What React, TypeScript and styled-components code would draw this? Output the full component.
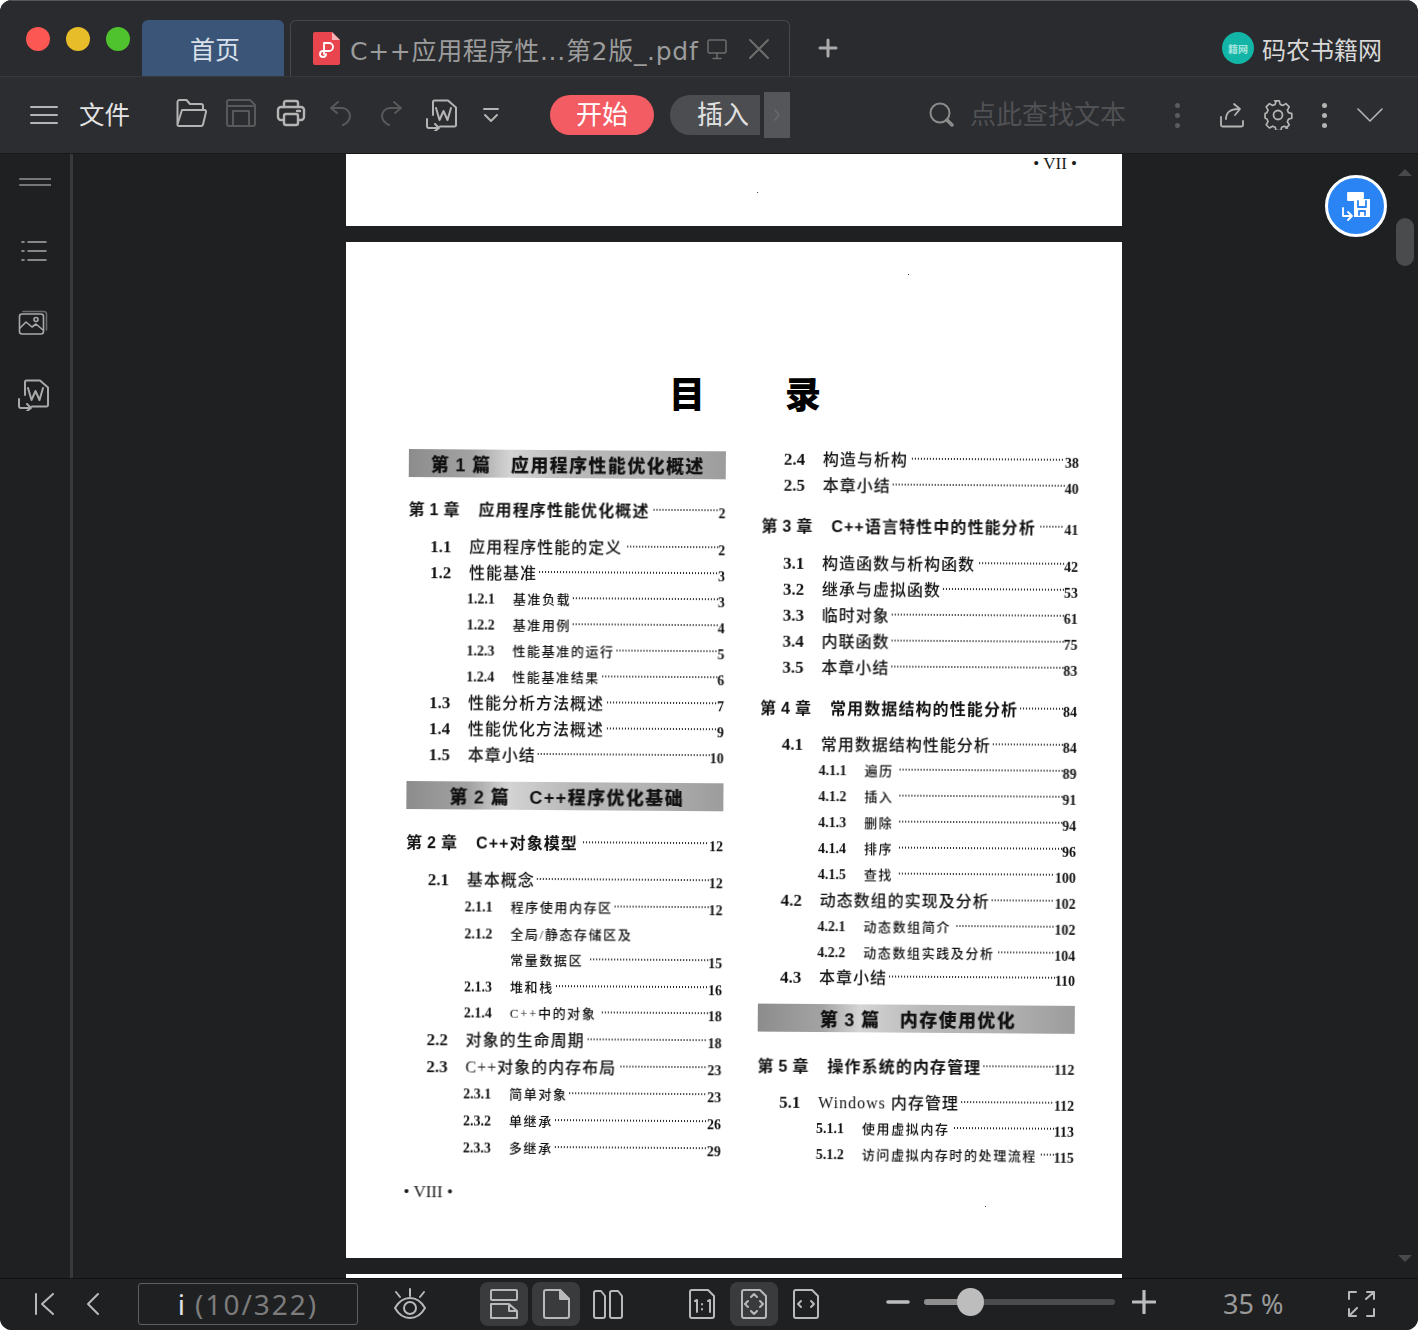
import React from "react"
import styled, { createGlobalStyle } from "styled-components"

const CJK = `"Noto Sans CJK SC", "Noto Sans", sans-serif`
const SERIF = `"Liberation Serif", "Noto Sans CJK SC", serif`
const SANS = `"Liberation Sans", "Noto Sans CJK SC", sans-serif`

const GlobalStyle = createGlobalStyle`
    html, body {
        margin: 0;
        padding: 0;
        background: #fff;
    }
    * {
        box-sizing: border-box;
    }
`

const Window = styled.div`
    width: 1418px;
    height: 1330px;
    border-radius: 12px;
    overflow: hidden;
    display: flex;
    flex-direction: column;
    background: #1f2022;
    font-family: ${CJK};
`

/* title bar */

const TitleBar = styled.div`
    height: 77px;
    flex: none;
    display: flex;
    align-items: flex-end;
    background: #2a2b2e;
    border-top: 1px solid #55565a;
    border-bottom: 1px solid #393a3d;
    padding-left: 26px;
`

const Lights = styled.div`
    display: flex;
    gap: 16px;
    align-self: center;
    margin-right: 12px;
`

const Light = styled.span<{ $color: string }>`
    width: 24px;
    height: 24px;
    border-radius: 50%;
    background: ${({ $color }) => $color};
`

const HomeTab = styled.div`
    width: 142px;
    height: 56px;
    border-radius: 6px 6px 0 0;
    background: #3b5578;
    color: #d9e0ea;
    font-size: 25px;
    display: flex;
    align-items: center;
    justify-content: center;
    padding-left: 4px;
    margin-right: 6px;
`

const DocTab = styled.div`
    width: 500px;
    height: 56px;
    border: 1px solid #47484b;
    border-bottom: none;
    border-radius: 6px 6px 0 0;
    display: flex;
    align-items: center;
    padding-left: 22px;
    color: #9c9c9c;
`

const DocTitle = styled.span`
    font-family: "DejaVu Sans", ${CJK};
    font-size: 25px;
    letter-spacing: 0.7px;
    margin-left: 10px;
    white-space: nowrap;
    width: 356px;
`

const TabAction = styled.span<{ $ml?: number }>`
    display: flex;
    margin-left: ${({ $ml }) => $ml ?? 0}px;
    color: #6d6d6d;
`

const AddTab = styled.div`
    height: 56px;
    margin-left: 28px;
    display: flex;
    align-items: center;
    color: #aaa;
`

const Brand = styled.div`
    height: 56px;
    margin-left: auto;
    padding-right: 36px;
    display: flex;
    align-items: center;
    gap: 8px;
    color: #d8d8d8;
    font-size: 24px;
`

const BrandLogo = styled.span`
    width: 32px;
    height: 32px;
    border-radius: 50%;
    background: #12b5a6;
    color: #a5e6df;
    font-size: 10px;
    font-weight: 700;
    display: flex;
    align-items: center;
    justify-content: center;
`

/* tool bar */

const ToolBar = styled.div`
    height: 77px;
    flex: none;
    display: flex;
    align-items: center;
    background: #2c2d30;
    border-bottom: 1px solid #18191a;
    padding-left: 30px;
`

const FileLabel = styled.span`
    color: #e4e4e4;
    font-size: 25.500px;
    line-height: 1;
    padding-bottom: 5px;
    margin-left: 21px;
`

const ToolGroup = styled.div`
    display: flex;
    margin-left: 36px;
`

const ToolButton = styled.div<{ $dim?: boolean; $raised?: boolean }>`
    width: 50px;
    height: 34px;
    padding-bottom: ${({ $raised }) => ($raised ? 4 : 0)}px;
    display: flex;
    align-items: center;
    justify-content: center;
    color: ${({ $dim }) => ($dim ? "#58595b" : "#b4b4b4")};
`

const StartPill = styled.div`
    width: 104px;
    height: 40px;
    margin-left: 34px;
    padding-bottom: 4px;
    border-radius: 20px;
    background: #f45c64;
    color: #fff;
    font-size: 26px;
    line-height: 1;
    display: flex;
    align-items: center;
    justify-content: center;
`

const InsertPill = styled.div`
    width: 90px;
    height: 40px;
    margin-left: 16px;
    padding: 0 0 4px 16px;
    border-radius: 20px 0 0 20px;
    background: #4c4d50;
    color: #e0e0e0;
    font-size: 26px;
    line-height: 1;
    display: flex;
    align-items: center;
    justify-content: center;
`

const MoreTabs = styled.div`
    width: 26px;
    height: 46px;
    margin-left: 4px;
    background: #555659;
    color: #68696b;
    display: flex;
    align-items: center;
    justify-content: center;
`

const SearchIcon = styled.div`
    margin-left: 139px;
    display: flex;
    color: #8c8c8c;
`

const SearchHint = styled.span`
    margin-left: 16px;
    padding-bottom: 4px;
    color: #505154;
    font-size: 26px;
    line-height: 1;
`

const Dots = styled.div<{ $ml: number; $color: string }>`
    margin-left: ${({ $ml }) => $ml}px;
    display: flex;
    flex-direction: column;
    gap: 5px;

    &::before,
    &::after,
    span {
        content: "";
        display: block;
        width: 5px;
        height: 5px;
        border-radius: 50%;
        background: ${({ $color }) => $color};
    }
`

const PlainIcon = styled.div<{ $ml: number }>`
    margin-left: ${({ $ml }) => $ml}px;
    display: flex;
    color: #b4b4b4;
`

/* main area */

const Main = styled.div`
    flex: 1;
    min-height: 0;
    display: flex;
    position: relative;
`

const SideBar = styled.div`
    width: 73px;
    flex: none;
    display: flex;
    flex-direction: column;
    align-items: center;
    padding: 10px 9px 0 0;
    border-right: 3px solid #39393b;
    color: #a9a9a9;
`

const SideItem = styled.div`
    height: 72px;
    width: 100%;
    display: flex;
    align-items: center;
    justify-content: center;
    padding-left: 4px;
    flex: none;

    &:first-child {
        height: 36px;
        margin-bottom: 15px;
    }
`

const Canvas = styled.div`
    flex: 1;
    min-width: 0;
    overflow: hidden;
    display: flex;
    flex-direction: column;
    align-items: center;
    gap: 16px;
    background: #1f2022;
`

const Sheet = styled.div<{ $h: number }>`
    width: 776px;
    height: ${({ $h }) => $h}px;
    flex: none;
    background: #fff;
    color: #111;
    position: relative;
`

const SheetFoot = styled.div`
    font-family: ${SERIF};
    font-size: 17px;
    line-height: 20px;
    text-align: right;
    padding-right: 45px;
    color: #1c1c1c;
`

const Speck = styled.i<{ $x: number; $y: number }>`
    position: absolute;
    left: ${({ $x }) => $x}px;
    top: ${({ $y }) => $y}px;
    width: 1px;
    height: 1px;
    background: #444;
`

const BigTitle = styled.div`
    margin-top: 125px;
    height: 50px;
    display: flex;
    justify-content: center;
    gap: 80px;
    padding-left: 22px;
    font-size: 36px;
    font-weight: 900;
    line-height: 50px;
    color: #000;
`

const Scan = styled.div`
    margin: 25px 0 0 63px;
    width: 672px;
    transform: rotate(0.42deg);
    transform-origin: 0 0;
    filter: blur(0.35px);
`

const Columns = styled.div`
    display: flex;
    gap: 36px;
    align-items: flex-start;
`

const Column = styled.div<{ $top: number }>`
    width: 317px;
    flex: none;
    display: flex;
    flex-direction: column;
    padding-top: ${({ $top }) => $top}px;
`

const Banner = styled.div<{ $indent: number; $dy: number }>`
    height: 28px;
    flex: none;
    margin: 15px 0 3px;
    padding-left: ${({ $indent }) => $indent}px;
    display: flex;
    align-items: center;
    gap: 20px;
    background: linear-gradient(90deg, #8c8c8c 0%, #a3a3a3 20%, #d4d4d4 32%, #b9b9b9 52%, #b3b3b3 75%, #9c9c9c 100%);
    font-family: ${SANS};
    font-size: 18px;
    font-weight: 900;
    color: #111;
    white-space: nowrap;
    transform: translateY(${({ $dy }) => $dy}px);

    &:first-child {
        margin-top: 0;
    }
`

const BannerLabel = styled.span`
    letter-spacing: 0.8px;
`

const BannerTitle = styled.span`
    letter-spacing: 1.4px;
`

type Kind = "chapter" | "sec" | "sub" | "cont"

const rowSpace: Record<Kind, string> = {
    chapter: "margin-top: 15px; margin-bottom: 11px; padding-left: 0;",
    sec: "padding-left: 22px;",
    sub: "padding-left: 59px;",
    cont: "padding-left: 105px;",
}

const Row = styled.div<{ $kind: Kind; $dy: number }>`
    height: 26px;
    flex: none;
    display: flex;
    align-items: center;
    white-space: nowrap;
    ${({ $kind }) => rowSpace[$kind]}
    transform: translateY(${({ $dy }) => $dy}px);
`

const numberWidth: Record<Kind, number> = { chapter: 70, sec: 39, sub: 46, cont: 0 }

const RowNumber = styled.span<{ $kind: Kind }>`
    flex: none;
    width: ${({ $kind }) => numberWidth[$kind]}px;
    padding-top: ${({ $kind }) => ($kind === "chapter" ? 0 : 3)}px;
    font-family: ${({ $kind }) => ($kind === "chapter" ? SANS : SERIF)};
    font-size: ${({ $kind }) => ($kind === "sub" ? 14 : $kind === "sec" ? 17 : 16)}px;
    font-weight: 700;
    letter-spacing: ${({ $kind }) => ($kind === "chapter" ? 0.3 : 0)}px;
`

const RowTitle = styled.span<{ $kind: Kind }>`
    flex: none;
    font-family: ${({ $kind }) => ($kind === "chapter" ? SANS : SERIF)};
    font-size: ${({ $kind }) => ($kind === "sub" || $kind === "cont" ? 13 : 16)}px;
    font-weight: ${({ $kind }) => ($kind === "chapter" ? 700 : 500)};
    letter-spacing: ${({ $kind }) =>
        $kind === "sub" || $kind === "cont" ? 1.6 : $kind === "chapter" ? 1.1 : 1}px;
`

const Leader = styled.span<{ $gap: number }>`
    flex: 1;
    height: 2px;
    margin-left: ${({ $gap }) => $gap}px;
    background-image: radial-gradient(circle, #222 0.8px, transparent 1px);
    background-size: 3px 2px;
`

const PageNo = styled.span`
    flex: none;
    font-family: ${SERIF};
    font-size: 14px;
    font-weight: 700;
    padding-top: 7px;
`

const Footer = styled.div`
    margin-top: 17px;
    font-family: ${SERIF};
    font-size: 17px;
    line-height: 22px;
    color: #1c1c1c;
`

const Fab = styled.div`
    position: absolute;
    top: 21px;
    right: 31px;
    width: 62px;
    height: 62px;
    border-radius: 50%;
    border: 3px solid #fff;
    background: #2b84f3;
    display: flex;
    align-items: center;
    justify-content: center;
    color: #fff;
`

const ScrollRail = styled.div`
    width: 23px;
    flex: none;
    display: flex;
    flex-direction: column;
    align-items: center;
    padding-right: 3px;
    background: #1f2022;
`

const ScrollArrow = styled.span<{ $down?: boolean }>`
    width: 0;
    height: 0;
    border-left: 7px solid transparent;
    border-right: 7px solid transparent;
    ${({ $down }) =>
        $down
            ? "border-top: 7px solid #48494b; margin: auto 0 16px;"
            : "border-bottom: 7px solid #48494b; margin-top: 15px;"}
`

const ScrollThumb = styled.span`
    width: 18px;
    height: 48px;
    margin-top: 42px;
    border-radius: 9px;
    background: #4a4b4d;
`

/* bottom bar */

const BottomBar = styled.div`
    height: 52px;
    flex: none;
    display: flex;
    align-items: center;
    padding-bottom: 2px;
    background: #1f2022;
    border-top: 1px solid #111213;
`

const NavButton = styled.div<{ $ml?: number; $color?: string }>`
    width: 48px;
    height: 44px;
    flex: none;
    margin-left: ${({ $ml }) => $ml ?? 0}px;
    display: flex;
    align-items: center;
    justify-content: center;
    color: ${({ $color }) => $color ?? "#b9b9b9"};
`

const ViewGroup = styled.div<{ $ml: number }>`
    display: flex;
    gap: 4px;
    margin-left: ${({ $ml }) => $ml}px;
`

const ViewButton = styled(NavButton)<{ $active?: boolean }>`
    border-radius: 8px;
    background: ${({ $active }) => ($active ? "#3a3b3d" : "transparent")};
`

const PageBox = styled.div`
    width: 220px;
    height: 42px;
    margin-left: 21px;
    border: 1px solid #5f6062;
    border-radius: 3px;
    display: flex;
    align-items: center;
    justify-content: center;
    font-family: "Noto Sans", sans-serif;
    font-size: 28px;
    line-height: 1;
    letter-spacing: 2px;
    color: #7c7c7c;
    gap: 8px;
`

const PageCurrent = styled.span`
    color: #e2e2e2;
`

const ZoomSign = styled.div<{ $ml: number }>`
    margin-left: ${({ $ml }) => $ml}px;
    margin-bottom: 3px;
    display: flex;
    color: #bdbdbd;
`

const Slider = styled.div`
    width: 191px;
    height: 6px;
    margin: 0 0 3px 14px;
    border-radius: 3px;
    background: #4b4c4e;
    position: relative;
`

const SliderFill = styled.div`
    height: 100%;
    border-radius: 3px;
    background: #8f8f8f;
`

const SliderThumb = styled.span`
    position: absolute;
    left: 33px;
    top: -11px;
    width: 27px;
    height: 28px;
    border-radius: 50%;
    background: #bdbdbd;
`

const ZoomValue = styled.span`
    width: 60px;
    margin-left: 67px;
    font-family: "Noto Sans", sans-serif;
    font-size: 27px;
    line-height: 1;
    color: #9a9a9a;
    white-space: nowrap;
`

const FullScreen = styled.div`
    margin-left: 64px;
    display: flex;
    color: #b9b9b9;
`

const Glyph = styled.svg<{ $sw?: number }>`
    display: block;
    flex: none;
    fill: none;
    stroke: currentColor;
    stroke-width: ${({ $sw }) => $sw ?? 2};
    stroke-linecap: round;
    stroke-linejoin: round;
`

function Icon({ w, h, sw, children }: { w: number; h: number; sw?: number; children: React.ReactNode }) {
    return (
        <Glyph width={w} height={h} viewBox={`0 0 ${w} ${h}`} $sw={sw}>
            {children}
        </Glyph>
    )
}

const WordDoc = () => (
    <Icon w={32} h={32}>
        <path d="M8 16V3a1.5 1.5 0 0 1 1.5-1.5H23l8 7V26a1.5 1.5 0 0 1-1.5 1.5H15" />
        <path d="M11 9l3.5 12 4-9 4 9 3.5-12" />
        <path d="M2 20v7a2 2 0 0 0 2 2h10M10 25l4 4-4 3" />
    </Icon>
)

type Toc =
    | { part: [string, string]; indent: number; dy?: number }
    | { k: Kind; n?: string; t: string; p?: string; gap?: number; dy?: number }

// dy follows the page skew of the scan, rows are not evenly spaced in the reference
const leftToc: Toc[] = [
    { part: ["第 1 篇", "应用程序性能优化概述"], indent: 22 },
    { k: "chapter", n: "第 1 章", t: "应用程序性能优化概述", p: "2", gap: 3 },
    { k: "sec", n: "1.1", t: "应用程序性能的定义", p: "2", gap: 4 },
    { k: "sec", n: "1.2", t: "性能基准", p: "3" },
    { k: "sub", n: "1.2.1", t: "基准负载", p: "3" },
    { k: "sub", n: "1.2.2", t: "基准用例", p: "4" },
    { k: "sub", n: "1.2.3", t: "性能基准的运行", p: "5" },
    { k: "sub", n: "1.2.4", t: "性能基准结果", p: "6" },
    { k: "sec", n: "1.3", t: "性能分析方法概述", p: "7", gap: 2 },
    { k: "sec", n: "1.4", t: "性能优化方法概述", p: "9", gap: 2 },
    { k: "sec", n: "1.5", t: "本章小结", p: "10" },
    { part: ["第 2 篇", "C++程序优化基础"], indent: 43 },
    { k: "chapter", n: "第 2 章", t: "C++对象模型", p: "12", gap: 4, dy: 1 },
    { k: "sec", n: "2.1", t: "基本概念", p: "12", dy: 1 },
    { k: "sub", n: "2.1.1", t: "程序使用内存区", p: "12", dy: 2 },
    { k: "sub", n: "2.1.2", t: "全局/静态存储区及", dy: 3 },
    { k: "cont", t: "常量数据区", p: "15", gap: 6, dy: 3 },
    { k: "sub", n: "2.1.3", t: "堆和栈", p: "16", dy: 4 },
    { k: "sub", n: "2.1.4", t: "C++中的对象", p: "18", gap: 4, dy: 4 },
    { k: "sec", n: "2.2", t: "对象的生命周期", p: "18", gap: 2, dy: 5 },
    { k: "sec", n: "2.3", t: "C++对象的内存布局", p: "23", gap: 3, dy: 6 },
    { k: "sub", n: "2.3.1", t: "简单对象", p: "23", dy: 7 },
    { k: "sub", n: "2.3.2", t: "单继承", p: "26", dy: 8 },
    { k: "sub", n: "2.3.3", t: "多继承", p: "29", dy: 9 },
]

const rightToc: Toc[] = [
    { k: "sec", n: "2.4", t: "构造与析构", p: "38", gap: 3 },
    { k: "sec", n: "2.5", t: "本章小结", p: "40" },
    { k: "chapter", n: "第 3 章", t: "C++语言特性中的性能分析", p: "41", gap: 3 },
    { k: "sec", n: "3.1", t: "构造函数与析构函数", p: "42", gap: 3 },
    { k: "sec", n: "3.2", t: "继承与虚拟函数", p: "53" },
    { k: "sec", n: "3.3", t: "临时对象", p: "61" },
    { k: "sec", n: "3.4", t: "内联函数", p: "75" },
    { k: "sec", n: "3.5", t: "本章小结", p: "83" },
    { k: "chapter", n: "第 4 章", t: "常用数据结构的性能分析", p: "84" },
    { k: "sec", n: "4.1", t: "常用数据结构性能分析", p: "84", dy: -1 },
    { k: "sub", n: "4.1.1", t: "遍历", p: "89", gap: 5, dy: -1 },
    { k: "sub", n: "4.1.2", t: "插入", p: "91", gap: 5, dy: -1 },
    { k: "sub", n: "4.1.3", t: "删除", p: "94", gap: 5, dy: -1 },
    { k: "sub", n: "4.1.4", t: "排序", p: "96", gap: 5, dy: -1 },
    { k: "sub", n: "4.1.5", t: "查找", p: "100", gap: 5, dy: -1 },
    { k: "sec", n: "4.2", t: "动态数组的实现及分析", p: "102", dy: -1 },
    { k: "sub", n: "4.2.1", t: "动态数组简介", p: "102", gap: 4, dy: -1 },
    { k: "sub", n: "4.2.2", t: "动态数组实践及分析", p: "104", gap: 3, dy: -1 },
    { k: "sec", n: "4.3", t: "本章小结", p: "110", dy: -2 },
    { part: ["第 3 篇", "内存使用优化"], indent: 62, dy: -2 },
    { k: "chapter", n: "第 5 章", t: "操作系统的内存管理", p: "112" },
    { k: "sec", n: "5.1", t: "Windows 内存管理", p: "112", dy: -1 },
    { k: "sub", n: "5.1.1", t: "使用虚拟内存", p: "113", gap: 3, dy: -1 },
    { k: "sub", n: "5.1.2", t: "访问虚拟内存时的处理流程", p: "115", gap: 3, dy: -1 },
]

function TocColumn({ items, top }: { items: Toc[]; top: number }) {
    return (
        <Column $top={top}>
            {items.map((item) =>
                "part" in item ? (
                    <Banner key={item.part[0]} $indent={item.indent} $dy={item.dy ?? 0}>
                        <BannerLabel>{item.part[0]}</BannerLabel>
                        <BannerTitle>{item.part[1]}</BannerTitle>
                    </Banner>
                ) : (
                    <Row key={item.t} $kind={item.k} $dy={item.dy ?? 0}>
                        {item.n && <RowNumber $kind={item.k}>{item.n}</RowNumber>}
                        <RowTitle $kind={item.k}>{item.t}</RowTitle>
                        {item.p && <Leader $gap={item.gap ?? 1} />}
                        {item.p && <PageNo>{item.p}</PageNo>}
                    </Row>
                )
            )}
        </Column>
    )
}

export default function App() {
    return (
        <>
            <GlobalStyle />
            <Window>
                <TitleBar>
                    <Lights>
                        <Light $color="#fc5753" />
                        <Light $color="#e8bd2a" />
                        <Light $color="#4fc32d" />
                    </Lights>
                    <HomeTab>首页</HomeTab>
                    <DocTab>
                        <Glyph width={27} height={33} viewBox="0 0 27 33" $sw={1.8}>
                            <path d="M0 2a2 2 0 0 1 2-2h17l8 8v23a2 2 0 0 1-2 2H2a2 2 0 0 1-2-2z" fill="#e8454e" stroke="none" />
                            <path d="M19 0l8 8h-8z" fill="#f4b3b6" stroke="none" />
                            <path d="M11 22V11h5a4 4 0 0 1 0 8h-6a3 3 0 1 0 3 3" stroke="#fff" />
                        </Glyph>
                        <DocTitle>C++应用程序性...第2版_.pdf</DocTitle>
                        <TabAction>
                            <Icon w={22} h={24} sw={1.5}>
                                <rect x="2" y="3" width="18" height="13" rx="1.5" />
                                <path d="M11 16v5M7 21.500h8" />
                            </Icon>
                        </TabAction>
                        <TabAction $ml={20}>
                            <Icon w={22} h={22}>
                                <path d="M2 2l18 18M20 2L2 20" />
                            </Icon>
                        </TabAction>
                    </DocTab>
                    <AddTab>
                        <Icon w={20} h={20} sw={3}>
                            <path d="M10 2v16M2 10h16" />
                        </Icon>
                    </AddTab>
                    <Brand>
                        <BrandLogo>籍网</BrandLogo>
                        码农书籍网
                    </Brand>
                </TitleBar>

                <ToolBar>
                    <PlainIcon $ml={0}>
                        <Icon w={28} h={20}>
                            <path d="M1 2h26M1 10h26M1 18h26" />
                        </Icon>
                    </PlainIcon>
                    <FileLabel>文件</FileLabel>
                    <ToolGroup>
                        <ToolButton $raised>
                            <Icon w={32} h={30}>
                                <path d="M2.500 25V4a2 2 0 0 1 2-2h7l3.500 4h11a2 2 0 0 1 2 2v4" />
                                <path d="M7 12h22.500a1.500 1.500 0 0 1 1.500 2l-3 12.500a2 2 0 0 1-2 1.500H4a1.500 1.500 0 0 1-1.500-2z" />
                            </Icon>
                        </ToolButton>
                        <ToolButton $dim $raised>
                            <Icon w={32} h={30}>
                                <path d="M2 4a2 2 0 0 1 2-2h21l5 5v19a2 2 0 0 1-2 2H4a2 2 0 0 1-2-2z" />
                                <path d="M2 8h26M8 28V13h16v15" />
                            </Icon>
                        </ToolButton>
                        <ToolButton $raised>
                            <Icon w={30} h={28} sw={2.4}>
                                <path d="M8 8V4a2 2 0 0 1 2-2h10a2 2 0 0 1 2 2v4" />
                                <path d="M8 21H5a3 3 0 0 1-3-3v-7a3 3 0 0 1 3-3h20a3 3 0 0 1 3 3v7a3 3 0 0 1-3 3h-3" />
                                <rect x="8" y="15" width="14" height="11" rx="2" />
                                <path d="M21 12h3" />
                            </Icon>
                        </ToolButton>
                        <ToolButton $dim $raised>
                            <Icon w={26} h={28}>
                                <path d="M10 3L3 9h11a8 8 0 0 1 8 8c0 4-3 7-7 9M3 9l6 5" />
                            </Icon>
                        </ToolButton>
                        <ToolButton $dim $raised>
                            <Icon w={26} h={28}>
                                <path d="M16 3l7 6H12a8 8 0 0 0-8 8c0 4 3 7 7 9M23 9l-6 5" />
                            </Icon>
                        </ToolButton>
                        <ToolButton>
                            <WordDoc />
                        </ToolButton>
                        <ToolButton>
                            <Icon w={16} h={16}>
                                <path d="M1 2h14M2 8l6 6 6-6" />
                            </Icon>
                        </ToolButton>
                    </ToolGroup>
                    <StartPill>开始</StartPill>
                    <InsertPill>插入</InsertPill>
                    <MoreTabs>
                        <Icon w={8} h={14} sw={1.5}>
                            <path d="M2 2l4 5-4 5" />
                        </Icon>
                    </MoreTabs>
                    <SearchIcon>
                        <Icon w={25} h={26}>
                            <circle cx="11" cy="11" r="9.500" />
                            <path d="M18 18l5 5" strokeWidth="3.500" />
                        </Icon>
                    </SearchIcon>
                    <SearchHint>点此查找文本</SearchHint>
                    <Dots $ml={49} $color="#5b5c5e">
                        <span />
                    </Dots>
                    <PlainIcon $ml={39}>
                        <Icon w={26} h={26} sw={1.8}>
                            <path d="M2 15v8a1.500 1.500 0 0 0 1.500 1.500h19A1.500 1.500 0 0 0 24 23v-4" />
                            <path d="M7 17c0-7 5-10 12-10M15 2l6 5-5 6" />
                        </Icon>
                    </PlainIcon>
                    <PlainIcon $ml={18}>
                        <Icon w={30} h={30} sw={1.8}>
                            <path d="M12.500 2h5l1 3.800 2.800 1.200 3.400-2 3.500 3.500-2 3.400 1.200 2.800 3.600 1v5l-3.600 1-1.200 2.800 2 3.400-3.500 3.500" transform="translate(0 -1) scale(.93)" />
                            <path d="M12.500 2l-1 3.800-2.800 1.200-3.400-2-3.500 3.500 2 3.400-1.200 2.800-2 .8v5l2 1 1.200 2.800-2 3.400 3.500 3.500 3.400-2 2.800 1.200 1 3.600h5l1-3.600 2.800-1.200 3.400 2" transform="translate(1.500 -1) scale(.93)" />
                            <circle cx="15" cy="15" r="4.500" />
                        </Icon>
                    </PlainIcon>
                    <Dots $ml={29} $color="#b4b4b4">
                        <span />
                    </Dots>
                    <PlainIcon $ml={30}>
                        <Icon w={26} h={16} sw={1.6}>
                            <path d="M1 2l12 12L25 2" />
                        </Icon>
                    </PlainIcon>
                </ToolBar>

                <Main>
                    <SideBar>
                        <SideItem>
                            <Icon w={36} h={10}>
                                <path d="M5 2h31M5 8h31" stroke="#777" />
                            </Icon>
                        </SideItem>
                        <SideItem>
                            <Icon w={30} h={24} sw={1.6}>
                                <path d="M4 3h2M10 3h18M4 12h2M10 12h18M4 21h2M10 21h18" />
                            </Icon>
                        </SideItem>
                        <SideItem>
                            <Icon w={30} h={26} sw={1.6}>
                                <rect x="1.500" y="4" width="24" height="20" rx="2.500" />
                                <path d="M5 1.500h21a2.500 2.500 0 0 1 2.500 2.500v16" opacity=".55" />
                                <path d="M2 18l6-6 6 5 4-3 7 6" />
                                <circle cx="18" cy="9.500" r="2" />
                            </Icon>
                        </SideItem>
                        <SideItem>
                            <WordDoc />
                        </SideItem>
                    </SideBar>

                    <Canvas>
                        <Sheet $h={72}>
                            <SheetFoot>• VII •</SheetFoot>
                            <Speck $x={411} $y={38} />
                        </Sheet>
                        <Sheet $h={1016}>
                            <Speck $x={562} $y={32} />
                            <Speck $x={639} $y={964} />
                            <BigTitle>
                                <span>目</span>
                                <span>录</span>
                            </BigTitle>
                            <Scan>
                                <Columns>
                                    <TocColumn items={leftToc} top={7} />
                                    <TocColumn items={rightToc} top={0} />
                                </Columns>
                                <Footer>• VIII •</Footer>
                            </Scan>
                        </Sheet>
                        <Sheet $h={4} />
                    </Canvas>

                    <ScrollRail>
                        <ScrollArrow />
                        <ScrollThumb />
                        <ScrollArrow $down />
                    </ScrollRail>

                    <Fab>
                        <Icon w={32} h={32} sw={1.8}>
                            <path d="M8 10V3h15v5h-9v2z" fill="currentColor" />
                            <rect x="14" y="9" width="16" height="18" fill="currentColor" stroke="none" />
                            <path d="M18 11v6h8v-6M19 25v-4h6v4" stroke="#2b84f3" />
                            <path d="M3 18v8h9M8 22l4 4-4 4" />
                        </Icon>
                    </Fab>
                </Main>

                <BottomBar>
                    <NavButton $ml={21}>
                        <Icon w={22} h={24}>
                            <path d="M2 2v20M19 2L8 12l11 10" />
                        </Icon>
                    </NavButton>
                    <NavButton>
                        <Icon w={14} h={24}>
                            <path d="M12 2L2 12l10 10" />
                        </Icon>
                    </NavButton>
                    <PageBox>
                        <PageCurrent>i</PageCurrent>
                        <span>(10/322)</span>
                    </PageBox>
                    <NavButton $ml={28}>
                        <Icon w={34} h={32} sw={2}>
                            <path d="M17 1v7M3 4l4 5M31 4l-4 5" />
                            <path d="M2 20C6 13 11 10 17 10s11 3 15 10c-4 7-9 10-15 10S6 27 2 20z" />
                            <circle cx="17" cy="20" r="6" />
                        </Icon>
                    </NavButton>
                    <ViewGroup $ml={46}>
                        <ViewButton $active>
                            <Icon w={30} h={32}>
                                <rect x="2" y="2" width="26" height="10" rx="1" />
                                <path d="M2 16h18l8 7v7H2zM20 16v7h8" />
                            </Icon>
                        </ViewButton>
                        <ViewButton $active>
                            <Icon w={30} h={32}>
                                <path d="M3 4a2 2 0 0 1 2-2h14l9 9v17a2 2 0 0 1-2 2H5a2 2 0 0 1-2-2z" />
                                <path d="M19 2l9 9h-9z" fill="currentColor" />
                            </Icon>
                        </ViewButton>
                        <ViewButton>
                            <Icon w={32} h={32}>
                                <path d="M2 5a2 2 0 0 1 2-2h5l4 5v20a2 2 0 0 1-2 2H4a2 2 0 0 1-2-2z" />
                                <path d="M18 5a2 2 0 0 1 2-2h6l4 5v20a2 2 0 0 1-2 2h-8a2 2 0 0 1-2-2z" />
                            </Icon>
                        </ViewButton>
                    </ViewGroup>
                    <ViewGroup $ml={46}>
                        <ViewButton>
                            <Icon w={30} h={32}>
                                <path d="M3 4a2 2 0 0 1 2-2h16l6 6v20a2 2 0 0 1-2 2H5a2 2 0 0 1-2-2z" />
                                <path d="M8 13l2-1v12M21 13l2-1v12M15 16v.5M15 21v.5" />
                            </Icon>
                        </ViewButton>
                        <ViewButton $active>
                            <Icon w={30} h={32}>
                                <path d="M3 4a2 2 0 0 1 2-2h16l6 6v20a2 2 0 0 1-2 2H5a2 2 0 0 1-2-2z" />
                                <path d="M12 9l3-3 3 3M12 23l3 3 3-3M9 13l-3 3 3 3M21 13l3 3-3 3" />
                            </Icon>
                        </ViewButton>
                        <ViewButton>
                            <Icon w={30} h={32}>
                                <path d="M3 4a2 2 0 0 1 2-2h16l6 6v20a2 2 0 0 1-2 2H5a2 2 0 0 1-2-2z" />
                                <path d="M10 13l-3 3 3 3M20 13l3 3-3 3" />
                            </Icon>
                        </ViewButton>
                    </ViewGroup>
                    <ZoomSign $ml={56}>
                        <Icon w={24} h={24} sw={3.600}>
                            <path d="M2 12h20" />
                        </Icon>
                    </ZoomSign>
                    <Slider>
                        <SliderFill style={{ width: `${(46 / 191) * 100}%` }} />
                        <SliderThumb />
                    </Slider>
                    <ZoomSign $ml={17}>
                        <Icon w={24} h={24} sw={3.200}>
                            <path d="M12 1v22M1 12h22" />
                        </Icon>
                    </ZoomSign>
                    <ZoomValue>35 %</ZoomValue>
                    <FullScreen>
                        <Icon w={28} h={28}>
                            <path d="M9 2H2v7M19 9l8-7M20 2h7v7M2 19v7h7M2 26l8-8M27 19v7h-7" />
                        </Icon>
                    </FullScreen>
                </BottomBar>
            </Window>
        </>
    )
}
